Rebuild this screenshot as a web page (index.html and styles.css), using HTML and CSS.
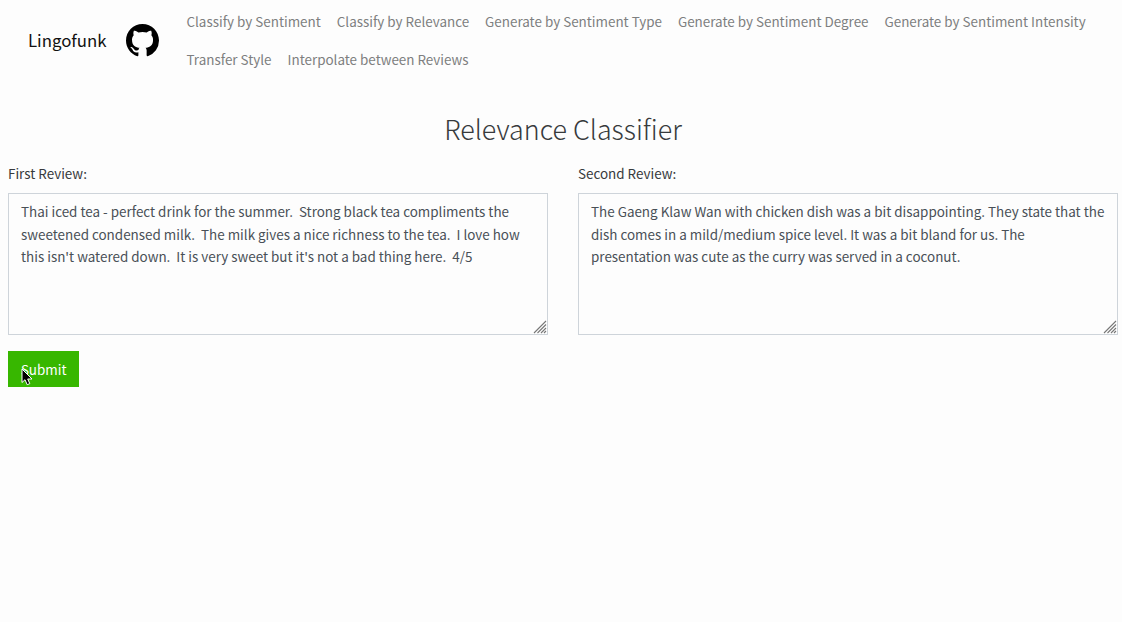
FILE: index.html
```html
<!DOCTYPE html>
<html lang="en">
<head>
<meta charset="utf-8">
<title>Lingofunk</title>
<link rel="stylesheet" href="styles.css">
</head>
<body>
<nav class="navbar">
  <a class="brand">Lingofunk</a>
  <a class="github"><svg viewBox="0 0 16 16" width="33" height="33"><path fill-rule="evenodd" d="M8 0C3.58 0 0 3.58 0 8c0 3.54 2.29 6.53 5.47 7.59.4.07.55-.17.55-.38 0-.19-.01-.82-.01-1.49-2.01.37-2.53-.49-2.69-.94-.09-.23-.48-.94-.82-1.13-.28-.15-.68-.52-.01-.53.63-.01 1.08.58 1.23.82.72 1.21 1.87.87 2.33.66.07-.52.28-.87.51-1.07-1.78-.2-3.64-.89-3.64-3.95 0-.87.31-1.59.82-2.15-.08-.2-.36-1.02.08-2.12 0 0 .67-.21 2.2.82.64-.18 1.32-.27 2-.27s1.36.09 2 .27c1.53-1.04 2.2-.82 2.2-.82.44 1.1.16 1.92.08 2.12.51.56.82 1.27.82 2.15 0 3.07-1.87 3.75-3.65 3.95.29.25.54.73.54 1.48 0 1.07-.01 1.93-.01 2.2 0 .21.15.46.55.38A8.01 8.01 0 0 0 16 8c0-4.42-3.58-8-8-8z"/></svg></a>
  <div class="links">
    <a>Classify by Sentiment</a>
    <a>Classify by Relevance</a>
    <a>Generate by Sentiment Type</a>
    <a>Generate by Sentiment Degree</a>
    <a>Generate by Sentiment Intensity</a>
    <a>Transfer Style</a>
    <a>Interpolate between Reviews</a>
  </div>
</nav>
<main>
  <h1>Relevance Classifier</h1>
  <form class="reviews">
    <div class="field">
      <label for="first">First Review:</label>
      <div class="box">
        <textarea id="first" spellcheck="false">Thai iced tea - perfect drink for the summer.  Strong black tea compliments the sweetened condensed milk.  The milk gives a nice richness to the tea.  I love how this isn't watered down.  It is very sweet but it's not a bad thing here.  4/5</textarea>
        <svg class="grip" viewBox="0 0 14 14" width="14" height="14"><path d="M1 13 13 1M4.5 13 13 4.5M8 13l5-5M11 13l2-2"/></svg>
      </div>
    </div>
    <div class="field">
      <label for="second">Second Review:</label>
      <div class="box">
        <textarea id="second" spellcheck="false">The Gaeng Klaw Wan with chicken dish was a bit disappointing. They state that the dish comes in a mild/medium spice level. It was a bit bland for us. The presentation was cute as the curry was served in a coconut.</textarea>
        <svg class="grip" viewBox="0 0 14 14" width="14" height="14"><path d="M1 13 13 1M4.5 13 13 4.5M8 13l5-5M11 13l2-2"/></svg>
      </div>
    </div>
  </form>
  <div class="actions">
    <button class="submit">Submit</button>
    <svg class="cursor" viewBox="0 0 12 18" width="12" height="18"><path d="M1 1v13.5l3-2.8 2.2 5 2.6-1.1-2.1-4.6h4.3z"/></svg>
  </div>
</main>
</body>
</html>
```
FILE: styles.css
```css
* { box-sizing: border-box; }
body {
  margin: 0;
  background: #fdfdfd;
  color: #373a3c;
  font: 13.43px/22.5px "Noto Sans CJK SC", "Noto Sans", sans-serif;
}
.navbar { display: flex; align-items: center; height: 80.6px; padding: 0 8px 0 28px; }
.brand { width: 98px; font-size: 16.8px; color: #111; }
.github { width: 52.5px; height: 33px; }
.github svg { display: block; }
.links { display: flex; flex-wrap: wrap; flex: 1; }
.links a { padding: 8px; color: #7e7f80; white-space: nowrap; }
main { padding: 31.4px 4px 0 8px; }
h1 { margin: 0; text-align: center; font-size: 26.86px; line-height: 33px; font-weight: 300; }
.reviews { display: flex; gap: 30px; margin-top: 17.5px; }
.field { width: 540px; }
label { display: block; margin-bottom: 8.2px; }
.box { position: relative; height: 142px; }
textarea {
  display: block;
  width: 100%;
  height: 100%;
  margin: 0;
  padding: 6px 12px;
  border: 1px solid #ced4da;
  border-radius: 0;
  background: #fdfdfd;
  color: #495057;
  font: inherit;
  resize: none;
  overflow: hidden;
}
.grip { position: absolute; right: 1px; bottom: 1px; fill: none; stroke: #777; stroke-width: 1.1; }
.actions { position: relative; margin-top: 16px; }
.submit {
  display: block;
  width: 71.4px;
  height: 36.2px;
  padding: 0;
  border: 0;
  background: #37b700;
  color: #fff;
  font: inherit;
}
.cursor { position: absolute; left: 12.5px; top: 17px; fill: #000; stroke: #fff; stroke-width: 1; }
```
